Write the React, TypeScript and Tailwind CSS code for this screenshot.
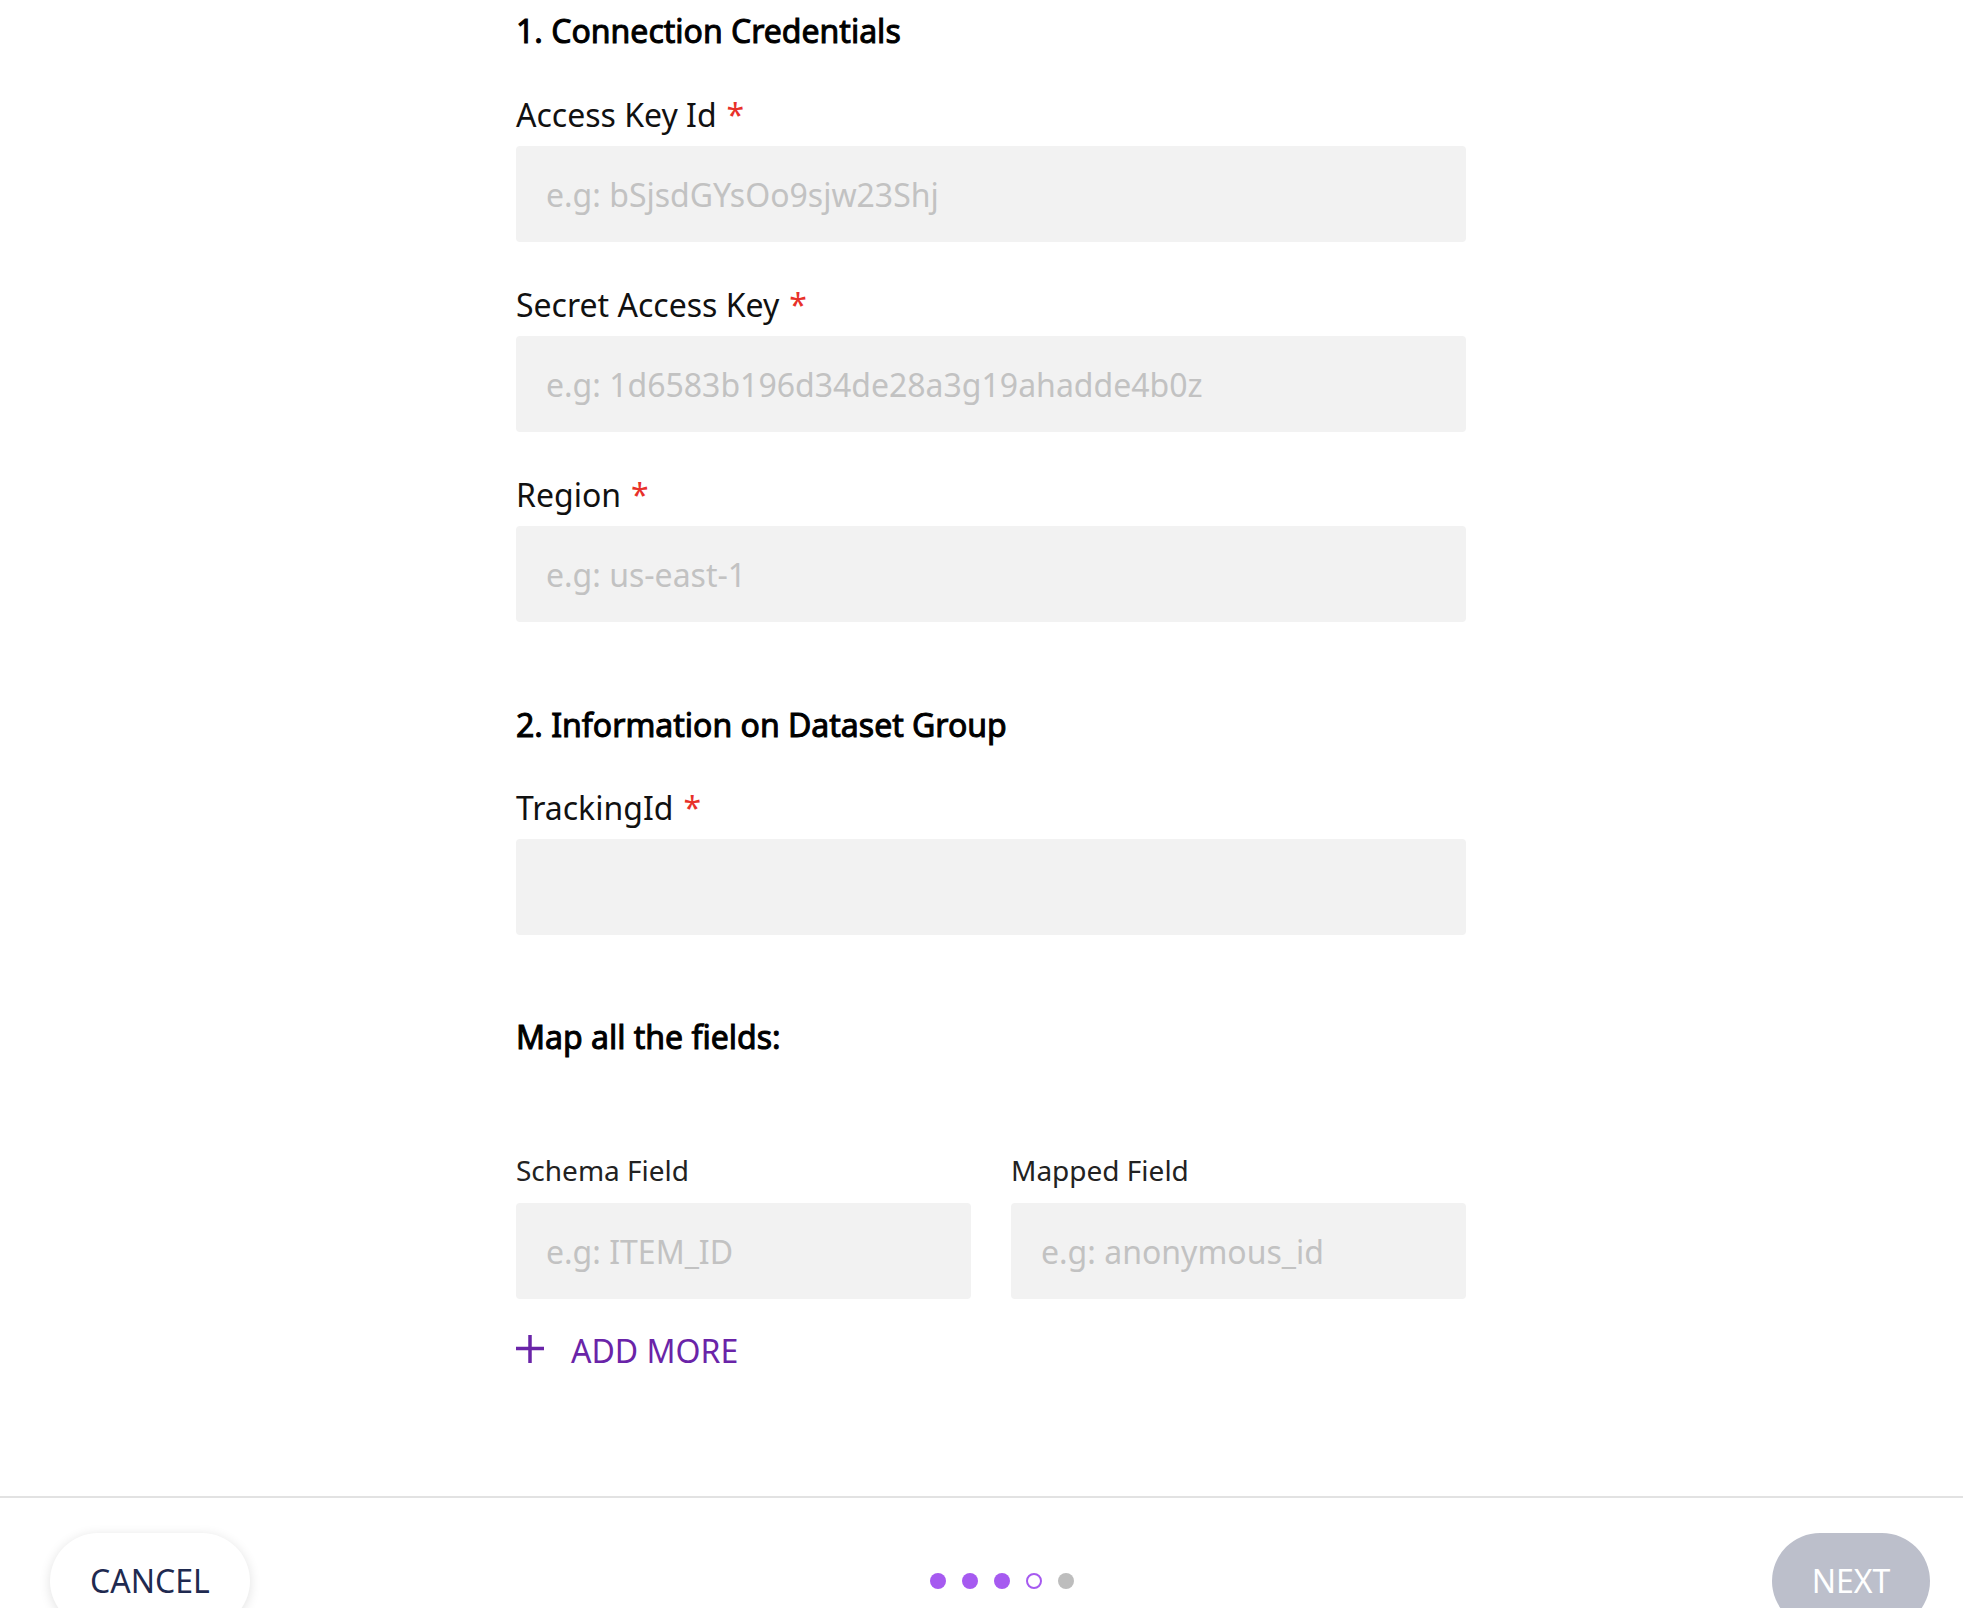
import { useState } from 'react';

interface FieldProps {
  label: string;
  placeholder?: string;
  required?: boolean;
}

function Field({ label, placeholder, required }: FieldProps) {
  return (
    <div className="flex flex-col">
      <label className="text-[32px] leading-[44px] text-[#111] mb-[9px]">
        {label}
        {required && <span className="text-[#e8312a] ml-[10px]">*</span>}
      </label>
      <input
        className="h-[96px] w-full rounded-[4px] bg-[#f2f2f2] px-[30px] text-[32px] text-[#333] placeholder:text-[#c2c2c2] outline-none"
        placeholder={placeholder}
      />
    </div>
  );
}

function SectionTitle({ children }: { children: string }) {
  return (
    <h2 className="text-[32px] leading-[44px] text-black [-webkit-text-stroke:1px_#000]">
      {children}
    </h2>
  );
}

const STEPS = ['done', 'done', 'done', 'current', 'todo'] as const;

export default function App() {
  const [rows] = useState([{ schema: 'e.g: ITEM_ID', mapped: 'e.g: anonymous_id' }]);

  return (
    <div className="relative flex h-[1608px] flex-col overflow-hidden bg-white font-['Noto_Sans',sans-serif]">
      {/* Form body */}
      <div className="ml-[516px] w-[950px] pt-[9px]">
        <SectionTitle>1. Connection Credentials</SectionTitle>

        <div className="mt-[40px] flex flex-col gap-[41px]">
          <Field label="Access Key Id" placeholder="e.g: bSjsdGYsOo9sjw23Shj" required />
          <Field label="Secret Access Key" placeholder="e.g: 1d6583b196d34de28a3g19ahadde4b0z" required />
          <Field label="Region" placeholder="e.g: us-east-1" required />
        </div>

        <div className="mt-[81px]">
          <SectionTitle>2. Information on Dataset Group</SectionTitle>
        </div>
        <div className="mt-[39px]">
          <Field label="TrackingId" required />
        </div>

        <div className="mt-[80px]">
          <SectionTitle>Map all the fields:</SectionTitle>
        </div>

        {/* Mapping rows */}
        <div className="mt-[91px] grid grid-cols-2 gap-x-[40px]">
          <span className="text-[28px] leading-[40px] text-[#222] mb-[13px]">Schema Field</span>
          <span className="text-[28px] leading-[40px] text-[#222] mb-[13px]">Mapped Field</span>
          {rows.map((r, i) => (
            <div key={i} className="contents">
              <input
                className="h-[96px] w-full rounded-[4px] bg-[#f2f2f2] px-[30px] text-[32px] placeholder:text-[#c2c2c2] outline-none"
                placeholder={r.schema}
              />
              <input
                className="h-[96px] w-full rounded-[4px] bg-[#f2f2f2] px-[30px] text-[32px] placeholder:text-[#c2c2c2] outline-none"
                placeholder={r.mapped}
              />
            </div>
          ))}
        </div>

        <button className="mt-[30px] flex h-[44px] items-center gap-[27px] text-[32px] leading-[44px] text-[#6a24a8]">
          <svg width="28" height="28" viewBox="0 0 28 28" className="-mt-[4px]">
            <path d="M14 0v28M0 13.5h28" stroke="#6a24a8" strokeWidth="3.5" fill="none" />
          </svg>
          ADD MORE
        </button>
      </div>

      {/* Footer */}
      <div className="mt-[123px] shrink-0">
        <div className="h-[2px] bg-[#e2e2e2]" />
        <div className="flex items-center justify-between pl-[50px] pr-[33px] pt-[35px]">
          <button className="h-[96px] w-[200px] rounded-full bg-white text-[32px] text-[#1f2a50] shadow-[0_2px_12px_rgba(0,0,0,0.12)]">
            CANCEL
          </button>
          <div className="mr-[18px] flex items-center gap-[16px]">
            {STEPS.map((s, i) =>
              s === 'done' ? (
                <span key={i} className="h-[16px] w-[16px] rounded-full bg-[#a65af0]" />
              ) : s === 'current' ? (
                <span key={i} className="h-[16px] w-[16px] rounded-full border-[2px] border-[#a65af0]" />
              ) : (
                <span key={i} className="h-[16px] w-[16px] rounded-full bg-[#bdbdbd]" />
              ),
            )}
          </div>
          <button className="h-[96px] w-[158px] rounded-full bg-[#bcbfcb] text-[32px] text-white">
            NEXT
          </button>
        </div>
      </div>
    </div>
  );
}
